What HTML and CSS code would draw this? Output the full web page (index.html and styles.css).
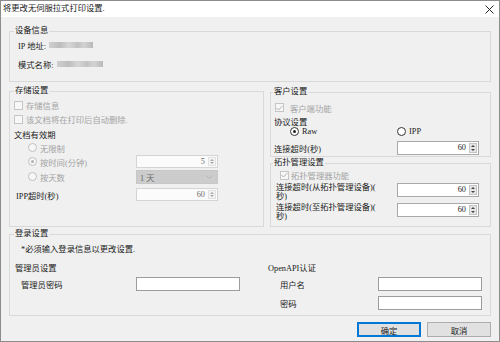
FILE: index.html
```html
<!DOCTYPE html>
<html lang="zh-CN">
<head>
  <meta charset="UTF-8" />
  <title>打印设置</title>
  <link rel="stylesheet" href="styles.css">
</head>
<body>
  <div class="window">
    <div class="titlebar">
      <span class="title">将更改无伺服拉式打印设置.</span>
      <svg class="close" width="9" height="9" viewBox="0 0 9 9"><path d="M0.5 0.5L8.5 8.5M8.5 0.5L0.5 8.5" stroke="#222" stroke-width="1"/></svg>
    </div>

    <div class="content">
      <fieldset class="group device">
        <legend>设备信息</legend>
        <div class="info-row first"><span>IP 地址:</span><span class="blur w44"></span></div>
        <div class="info-row second"><span>模式名称:</span><span class="blur w46"></span></div>
      </fieldset>

      <div class="middle">
        <fieldset class="group storage">
          <legend>存储设置</legend>
          <div class="srow r1"><label class="check-label dis"><span class="checkbox dis"></span>存储信息</label></div>
          <div class="srow r2"><label class="check-label dis"><span class="checkbox dis"></span>该文档将在打印后自动删除.</label></div>
          <div class="srow r3"><span>文档有效期</span></div>
          <div class="srow r4"><label class="radio-label dis"><span class="radio dis"></span>无限制</label></div>
          <div class="srow r5">
            <label class="radio-label dis"><span class="radio dis on"></span>按时间(分钟)</label>
            <div class="spin dis"><span class="spin-val">5</span><span class="spin-btns"><i class="up"></i><i class="down"></i></span></div>
          </div>
          <div class="srow r6">
            <label class="radio-label dis"><span class="radio dis"></span>按天数</label>
            <div class="combo"><span>1 天</span><svg width="7" height="4" viewBox="0 0 7 4"><path d="M0.5 0.5L3.5 3.5L6.5 0.5" fill="none" stroke="#b4b4b4"/></svg></div>
          </div>
          <div class="srow r7">
            <span class="ipp-label">IPP超时(秒)</span>
            <div class="spin dis"><span class="spin-val">60</span><span class="spin-btns"><i class="up"></i><i class="down"></i></span></div>
          </div>
        </fieldset>

        <div class="right-col">
          <fieldset class="group client">
            <legend>客户设置</legend>
            <div class="crow c1"><label class="check-label dis"><span class="checkbox dis checked"><svg width="7" height="6" viewBox="0 0 7 6"><path d="M0.5 3L2.5 5L6.5 0.8" fill="none" stroke="#b0b0b0" stroke-width="1"/></svg></span>客户端功能</label></div>
            <div class="crow c2"><span>协议设置</span></div>
            <div class="crow c3">
              <label class="radio-label raw"><span class="radio on"></span>Raw</label>
              <label class="radio-label"><span class="radio"></span>IPP</label>
            </div>
            <div class="crow c4">
              <span class="lbl">连接超时(秒)</span>
              <div class="spin"><span class="spin-val">60</span><span class="spin-btns"><i class="up"></i><i class="down"></i></span></div>
            </div>
          </fieldset>

          <fieldset class="group topo">
            <legend>拓扑管理设置</legend>
            <div class="crow t1"><label class="check-label dis"><span class="checkbox dis checked"><svg width="7" height="6" viewBox="0 0 7 6"><path d="M0.5 3L2.5 5L6.5 0.8" fill="none" stroke="#b0b0b0" stroke-width="1"/></svg></span>拓扑管理器功能</label></div>
            <div class="crow t2">
              <span class="lbl two">连接超时(从拓扑管理设备)(<br>秒)</span>
              <div class="spin"><span class="spin-val">60</span><span class="spin-btns"><i class="up"></i><i class="down"></i></span></div>
            </div>
            <div class="crow t2">
              <span class="lbl two">连接超时(至拓扑管理设备)(<br>秒)</span>
              <div class="spin"><span class="spin-val">60</span><span class="spin-btns"><i class="up"></i><i class="down"></i></span></div>
            </div>
          </fieldset>
        </div>
      </div>

      <fieldset class="group login">
        <legend>登录设置</legend>
        <div class="note">*必须输入登录信息以更改设置.</div>
        <div class="login-grid">
          <div class="login-col">
            <div class="sub-head">管理员设置</div>
            <div class="lrow admin"><span class="lbl">管理员密码</span><input type="password" class="text-input"></div>
          </div>
          <div class="login-col api">
            <div class="sub-head">OpenAPI认证</div>
            <div class="lrow user"><span class="lbl">用户名</span><input type="text" class="text-input"></div>
            <div class="lrow pass"><span class="lbl">密码</span><input type="password" class="text-input"></div>
          </div>
        </div>
      </fieldset>

      <div class="buttons">
        <button class="btn primary">确定</button>
        <button class="btn">取消</button>
      </div>
    </div>
  </div>
</body>
</html>
```

FILE: styles.css
```css
* {
  box-sizing: border-box;
}
body {
  margin: 0;
  font-family: "Liberation Serif", "Noto Sans CJK SC", serif;
  font-size: 8.3px;
  color: #1a1a1a;
  background: #fff;
}
.window {
  width: 500px;
  height: 342px;
  border: 1px solid #8c8c8c;
  background: #f0f0f0;
  display: flex;
  flex-direction: column;
}
.titlebar {
  height: 16px;
  background: #fff;
  display: flex;
  align-items: center;
  justify-content: space-between;
  padding: 0 5px 0 2px;
}
.title {
  line-height: 12px;
}
.content {
  padding: 0 8px;
}

/* group boxes */
.group {
  margin: 0;
  min-width: 0;
  border: 1px solid #d9d9d9;
  padding: 0 0 0 4px;
}
.group legend {
  padding: 0 1px;
  line-height: 12px;
}
.dis {
  color: #a3a3a3;
}

/* device info */
.device {
  margin-top: 8px;
  padding-bottom: 10px;
}
.info-row {
  height: 14px;
  display: flex;
  align-items: center;
  margin-left: 4px;
}
.info-row.first {
  margin-top: 1px;
}
.info-row.second {
  margin-top: 5px;
}
.blur {
  height: 6px;
  margin-left: 3px;
  background: linear-gradient(90deg, #cfcfcf, #bdbdbd 25%, #d6d6d6 45%, #c2c2c2 65%, #d3d3d3 80%, #b9b9b9);
}
.w44 { width: 44px; }
.w46 { width: 46px; }

/* middle */
.middle {
  display: grid;
  grid-template-columns: 255px 221px;
  column-gap: 6px;
  align-items: start;
  margin-top: 3px;
}
.storage {
  padding-bottom: 24px;
}
.srow {
  display: grid;
  grid-template-columns: 122px 82px;
  align-items: center;
}
.r1 { height: 14px; margin-top: 1px; }
.r2 { height: 14px; }
.r3 { height: 14px; margin-top: 1px; }
.r4 { height: 13px; }
.r5 { height: 15px; }
.r6 { height: 15px; }
.r7 { height: 15px; margin-top: 3px; }
.ipp-label {
  padding-left: 2px;
}
.check-label, .radio-label {
  display: flex;
  align-items: center;
  white-space: nowrap;
}
.checkbox {
  width: 9px;
  height: 9px;
  border: 1px solid #333;
  background: #fff;
  margin-right: 3px;
  display: flex;
  align-items: center;
  justify-content: center;
}
.checkbox.dis {
  border-color: #c6c6c6;
  background: #f7f7f7;
}
.radio {
  width: 9px;
  height: 9px;
  border: 1px solid #333;
  border-radius: 50%;
  background: #fff;
  margin-right: 3px;
  display: flex;
  align-items: center;
  justify-content: center;
}
.radio.dis {
  border-color: #c0c0c0;
  background: #f7f7f7;
}
.radio.on::after {
  content: "";
  width: 3px;
  height: 3px;
  border-radius: 50%;
  background: #222;
}
.radio.dis.on::after {
  background: #b0b0b0;
}
.storage .radio-label {
  padding-left: 14px;
}

/* spin boxes */
.spin {
  width: 82px;
  height: 14px;
  display: flex;
  border: 1px solid #a9a9a9;
  background: #fff;
}
.spin.dis {
  height: 13px;
  border-color: #d4d4d4;
  background: #fbfbfb;
  color: #6d6d6d;
}
.spin-val {
  flex: 1;
  text-align: right;
  padding-right: 2px;
  line-height: 12px;
}
.spin.dis .spin-val {
  line-height: 11px;
}
.spin-btns {
  width: 8px;
  margin: 1px;
  display: flex;
  flex-direction: column;
  align-items: center;
  justify-content: space-around;
  background: #e6e6e6;
  border: 1px solid #c4c4c4;
}
.spin.dis .spin-btns {
  background: #f4f4f4;
  border-color: #e2e2e2;
}
.spin-btns i {
  width: 0;
  height: 0;
  border-left: 2px solid transparent;
  border-right: 2px solid transparent;
}
.spin-btns .up {
  border-bottom: 2px solid #444;
}
.spin-btns .down {
  border-top: 2px solid #444;
}
.spin.dis .spin-btns .up {
  border-bottom-color: #a8a8a8;
}
.spin.dis .spin-btns .down {
  border-top-color: #a8a8a8;
}
.combo {
  width: 82px;
  height: 14px;
  background: #cccccc;
  border: 1px solid #c8c8c8;
  color: #6a6a6a;
  display: flex;
  align-items: center;
  justify-content: space-between;
  padding: 0 4px 0 3px;
}

/* right column */
.right-col {
  display: flex;
  flex-direction: column;
  margin-top: 1px;
}
.client, .topo {
  padding-left: 2px;
}
.client {
  padding-bottom: 1px;
}
.topo {
  padding-bottom: 3px;
}
.crow {
  display: grid;
  grid-template-columns: 124px 82px;
  align-items: center;
}
.c1 { height: 13px; margin-top: 3px; }
.c1 .check-label { padding-left: 2px; }
.c1 .checkbox { margin-right: 6px; }
.c2 { height: 11px; margin-top: 1px; padding-left: 1px; }
.c3 { height: 10px; grid-template-columns: 124px 1fr; }
.c3 .raw { padding-left: 17px; }
.c4 { height: 15px; margin-top: 4px; }
.c4 .lbl { padding-left: 1px; }
.t1 { height: 11px; }
.t1 .check-label { padding-left: 7px; }
.t1 .checkbox { margin-right: 2px; }
.t2 {
  height: 20px;
  align-items: start;
}
.t1 + .t2 {
  margin-top: 3px;
}
.lbl.two {
  padding-left: 3px;
  line-height: 9px;
  white-space: nowrap;
}

/* login */
.login {
  margin-top: 1px;
  padding-bottom: 5px;
}
.note {
  height: 13px;
  line-height: 13px;
  margin-top: 3px;
  padding-left: 7px;
}
.login-grid {
  display: grid;
  grid-template-columns: 254px 1fr;
  margin-top: 6px;
}
.sub-head {
  height: 13px;
  line-height: 13px;
  padding-left: 1px;
}
.api .sub-head {
  padding-left: 0;
}
.lrow {
  display: grid;
  grid-template-columns: 122px 104px;
  align-items: center;
  height: 14px;
  margin-top: 2px;
}
.lrow .lbl {
  padding-left: 7px;
}
.api .lrow {
  grid-template-columns: 110px 104px;
}
.api .lrow .lbl {
  padding-left: 12px;
}
.api .lrow.pass {
  margin-top: 5px;
}
.text-input {
  width: 104px;
  height: 14px;
  margin: 0;
  padding: 0;
  border: 1px solid #9c9c9c;
  background: #fff;
}

/* buttons */
.buttons {
  display: flex;
  justify-content: flex-end;
  gap: 6px;
  margin-top: 6px;
}
.btn {
  width: 64px;
  height: 15px;
  padding: 0;
  font-family: inherit;
  font-size: 8.3px;
  color: #1a1a1a;
  background: #e1e1e1;
  border: 1px solid #adadad;
}
.btn.primary {
  border-color: #0078d7;
  box-shadow: inset 0 0 0 1px #0078d7;
}
```
